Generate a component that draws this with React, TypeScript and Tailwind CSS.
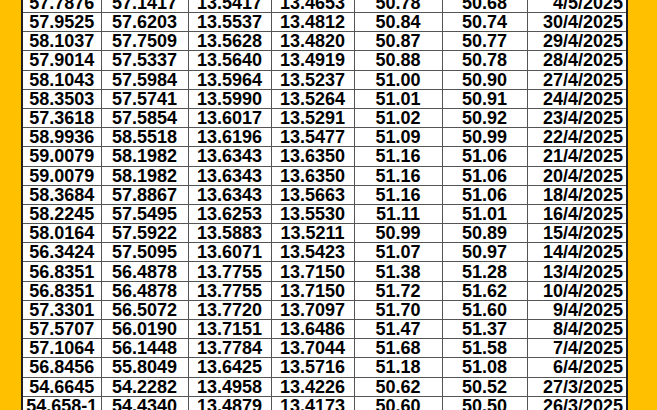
const rows: string[][] = [
  ['57.7876', '57.1417', '13.5417', '13.4653', '50.78', '50.68', '4/5/2025'],
  ['57.9525', '57.6203', '13.5537', '13.4812', '50.84', '50.74', '30/4/2025'],
  ['58.1037', '57.7509', '13.5628', '13.4820', '50.87', '50.77', '29/4/2025'],
  ['57.9014', '57.5337', '13.5640', '13.4919', '50.88', '50.78', '28/4/2025'],
  ['58.1043', '57.5984', '13.5964', '13.5237', '51.00', '50.90', '27/4/2025'],
  ['58.3503', '57.5741', '13.5990', '13.5264', '51.01', '50.91', '24/4/2025'],
  ['57.3618', '57.5854', '13.6017', '13.5291', '51.02', '50.92', '23/4/2025'],
  ['58.9936', '58.5518', '13.6196', '13.5477', '51.09', '50.99', '22/4/2025'],
  ['59.0079', '58.1982', '13.6343', '13.6350', '51.16', '51.06', '21/4/2025'],
  ['59.0079', '58.1982', '13.6343', '13.6350', '51.16', '51.06', '20/4/2025'],
  ['58.3684', '57.8867', '13.6343', '13.5663', '51.16', '51.06', '18/4/2025'],
  ['58.2245', '57.5495', '13.6253', '13.5530', '51.11', '51.01', '16/4/2025'],
  ['58.0164', '57.5922', '13.5883', '13.5211', '50.99', '50.89', '15/4/2025'],
  ['56.3424', '57.5095', '13.6071', '13.5423', '51.07', '50.97', '14/4/2025'],
  ['56.8351', '56.4878', '13.7755', '13.7150', '51.38', '51.28', '13/4/2025'],
  ['56.8351', '56.4878', '13.7755', '13.7150', '51.72', '51.62', '10/4/2025'],
  ['57.3301', '56.5072', '13.7720', '13.7097', '51.70', '51.60', '9/4/2025'],
  ['57.5707', '56.0190', '13.7151', '13.6486', '51.47', '51.37', '8/4/2025'],
  ['57.1064', '56.1448', '13.7784', '13.7044', '51.68', '51.58', '7/4/2025'],
  ['56.8456', '55.8049', '13.6425', '13.5716', '51.18', '51.08', '6/4/2025'],
  ['54.6645', '54.2282', '13.4958', '13.4226', '50.62', '50.52', '27/3/2025'],
  ['54.658-1', '54.4340', '13.4879', '13.4173', '50.60', '50.50', '26/3/2025'],
]

const widths = ['w-[79px]', 'w-[87px]', 'w-[83px]', 'w-[83px]', 'w-[88px]', 'w-[85px]', 'w-[100px]']

export default function App() {
  return (
    <main className="h-[410px] w-[657px] overflow-hidden bg-[#ffc000] pl-[21px] font-['Liberation_Sans',Arial,sans-serif]">
      <table className="-mt-[8px] table-fixed border-collapse border-2 border-[#222] bg-white text-[18px] font-bold leading-none text-black">
        <colgroup>
          {widths.map((w, i) => (
            <col key={i} className={w} />
          ))}
        </colgroup>
        <tbody>
          {rows.map((r, i) => (
            <tr key={i} className="h-[19.2px]">
              {r.map((c, j) => (
                <td
                  key={j}
                  className={
                    j === 6
                      ? 'overflow-hidden border border-[#555] pr-[3px] text-right whitespace-nowrap'
                      : 'overflow-hidden border border-[#555] text-center whitespace-nowrap'
                  }
                >
                  {c}
                </td>
              ))}
            </tr>
          ))}
        </tbody>
      </table>
    </main>
  )
}
